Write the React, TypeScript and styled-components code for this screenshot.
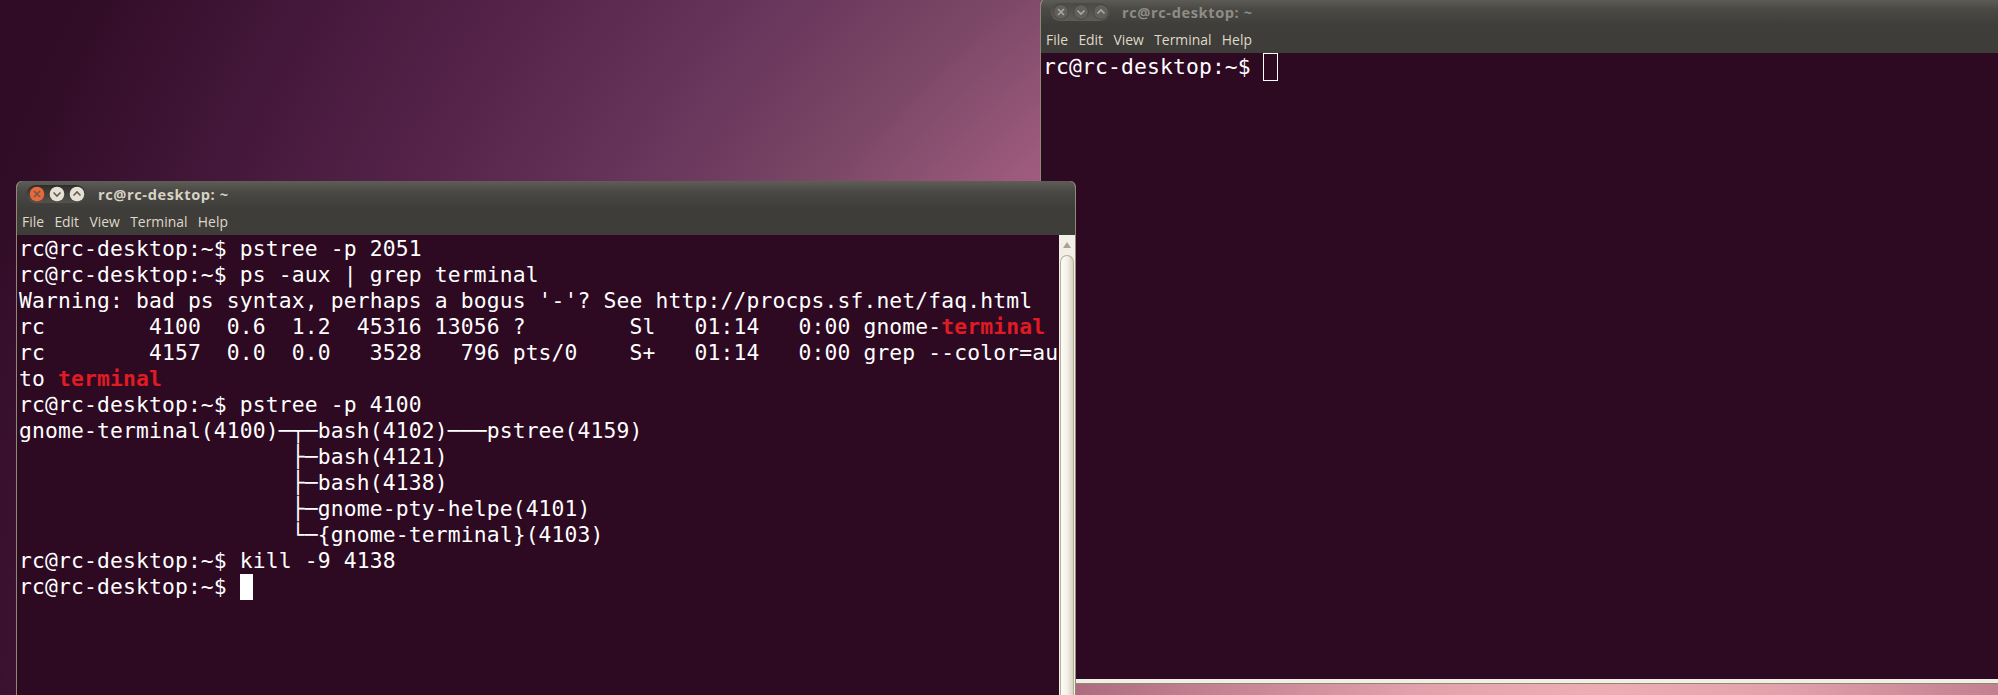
import React from "react";
import styled, { createGlobalStyle } from "styled-components";

const GlobalStyle = createGlobalStyle`
  html, body {
    margin: 0;
    padding: 0;
    height: 100%;
    background: #300c26;
  }
`;

const Desktop = styled.div`
  position: relative;
  width: 1998px;
  height: 695px;
  overflow: hidden;
  background: radial-gradient(
    circle 1800px at 1600px 760px,
    #f2b2b6 0px,
    #e2a0aa 200px,
    #ad6b80 530px,
    #a25d80 800px,
    #7a4766 975px,
    #65325a 1150px,
    #57244b 1300px,
    #46193c 1480px,
    #300c26 1700px
  );
`;

const Window = styled.div<{ $front?: boolean }>`
  position: absolute;
  left: ${props => (props.$front ? "16px" : "1040px")};
  top: ${props => (props.$front ? "181px" : "-1px")};
  width: ${props => (props.$front ? "1060px" : "980px")};
  height: ${props => (props.$front ? "530px" : "685px")};
  z-index: ${props => (props.$front ? 2 : 1)};
  display: flex;
  flex-direction: column;
  box-sizing: border-box;
  border: 1px solid #8f8873;
  border-top: 0;
  border-radius: 6px 6px 0 0;
  overflow: hidden;
  background: #f2efe6;
`;

const TitleBar = styled.div`
  height: 26px;
  flex: none;
  display: flex;
  align-items: center;
  padding-left: 9px;
  background: linear-gradient(#5f5d57, #4a4945 40%, #3f3e3a);
`;

const Pill = styled.svg`
  display: block;
  flex: none;
  width: 60px;
  height: 20px;
`;

const Title = styled.span<{ $front?: boolean }>`
  margin-left: 12px;
  font-family: "Open Sans", "Liberation Sans", sans-serif;
  font-weight: 700;
  font-size: 14.6px;
  letter-spacing: 0.6px;
  color: ${props => (props.$front ? "#d8d2c4" : "#8f8d85")};
`;

const MenuBar = styled.div`
  height: 28px;
  flex: none;
  display: flex;
  align-items: center;
  padding-left: 5px;
  gap: 10.4px;
  background: #3e3d39;
`;

const MenuItem = styled.span`
  font-family: "Open Sans", "Liberation Sans", sans-serif;
  font-size: 13.9px;
  color: #dfd8c8;
`;

const Body = styled.div`
  flex: 1;
  display: flex;
  min-height: 0;
`;

const Screen = styled.div`
  flex: 1;
  background: #2d0922;
  padding: 1px 0 0 2px;
  overflow: hidden;
`;

const Row = styled.div`
  height: 26px;
  font-family: "DejaVu Sans Mono", "Liberation Mono", monospace;
  font-size: 21.33px;
  line-height: 26px;
  letter-spacing: 0.15px;
  white-space: pre;
  color: #fff;
`;

const Match = styled.span`
  font-weight: 700;
  color: #e01b24;
`;

const Cursor = styled.span<{ $hollow?: boolean }>`
  display: inline-block;
  box-sizing: border-box;
  width: ${props => (props.$hollow ? "15px" : "13px")};
  height: ${props => (props.$hollow ? "28px" : "26px")};
  margin: ${props => (props.$hollow ? "-1px 0 0 -1px" : "0")};
  vertical-align: top;
  background: ${props => (props.$hollow ? "transparent" : "#fff")};
  border: ${props => (props.$hollow ? "1px solid #fff" : "0")};
`;

const Scrollbar = styled.div`
  flex: none;
  width: 16px;
  display: flex;
  flex-direction: column;
  align-items: center;
  background: #f2efe6;
`;

const ArrowUp = styled.div`
  height: 20px;
  flex: none;
  display: flex;
  align-items: center;
  justify-content: center;
`;

const Arrow = styled.div`
  width: 0;
  height: 0;
  border-left: 4px solid transparent;
  border-right: 4px solid transparent;
  border-bottom: 6px solid #a9a28f;
`;

const Thumb = styled.div`
  width: 14px;
  flex: 1;
  box-sizing: border-box;
  border: 1px solid #b5ae9b;
  border-bottom: 0;
  border-radius: 7px 7px 0 0;
  background: linear-gradient(90deg, #fdfcf8, #f4f1e9 50%, #d8d2c2);
`;

const BottomEdge = styled.div`
  height: 4px;
  flex: none;
  background: #f2efe6;
`;

function WindowButtons({ active }: { active?: boolean }) {
  const centers = [11, 31, 51];
  return (
    <Pill viewBox="0 0 60 20">
      <defs>
        <linearGradient id={active ? "pillA" : "pillB"} x1="0" y1="0" x2="0" y2="1">
          <stop offset="0" stopColor={active ? "#2e2d2a" : "#4b4a46"} />
          <stop offset="1" stopColor={active ? "#55534e" : "#5e5c57"} />
        </linearGradient>
      </defs>
      <rect x="0.5" y="1" width="59" height="18" rx="9" fill={`url(#${active ? "pillA" : "pillB"})`} />
      {centers.map((cx, i) => (
        <circle
          key={cx}
          cx={cx}
          cy="10"
          r="7.3"
          fill={active ? (i === 0 ? "#e8683a" : "#e6e1d6") : "#61605b"}
          stroke={active ? "none" : "#4a4945"}
        />
      ))}
      <g fill="none" strokeWidth="1.6" stroke={active ? "#6b5a50" : "#aaa89f"}>
        <path d="M8 7l6 6M14 7l-6 6" />
        <path d="M27.5 8.5l3.5 3.5 3.5-3.5" />
        <path d="M47.5 11.5l3.5-3.5 3.5 3.5" />
      </g>
    </Pill>
  );
}

function Menu() {
  return (
    <MenuBar>
      <MenuItem>File</MenuItem>
      <MenuItem>Edit</MenuItem>
      <MenuItem>View</MenuItem>
      <MenuItem>Terminal</MenuItem>
      <MenuItem>Help</MenuItem>
    </MenuBar>
  );
}

export default function App() {
  return (
    <Desktop>
      <GlobalStyle />
      <Window>
        <TitleBar>
          <WindowButtons />
          <Title>rc@rc-desktop: ~</Title>
        </TitleBar>
        <Menu />
        <Body>
          <Screen>
            <Row>rc@rc-desktop:~$ <Cursor $hollow /></Row>
          </Screen>
        </Body>
        <BottomEdge />
      </Window>
      <Window $front>
        <TitleBar>
          <WindowButtons active />
          <Title $front>rc@rc-desktop: ~</Title>
        </TitleBar>
        <Menu />
        <Body>
          <Screen>
            <Row>rc@rc-desktop:~$ pstree -p 2051</Row>
            <Row>rc@rc-desktop:~$ ps -aux | grep terminal</Row>
            <Row>Warning: bad ps syntax, perhaps a bogus '-'? See http://procps.sf.net/faq.html</Row>
            <Row>rc        4100  0.6  1.2  45316 13056 ?        Sl   01:14   0:00 gnome-<Match>terminal</Match></Row>
            <Row>rc        4157  0.0  0.0   3528   796 pts/0    S+   01:14   0:00 grep --color=au</Row>
            <Row>to <Match>terminal</Match></Row>
            <Row>rc@rc-desktop:~$ pstree -p 4100</Row>
            <Row>gnome-terminal(4100)─┬─bash(4102)───pstree(4159)</Row>
            <Row>{"                     ├─bash(4121)"}</Row>
            <Row>{"                     ├─bash(4138)"}</Row>
            <Row>{"                     ├─gnome-pty-helpe(4101)"}</Row>
            <Row>{"                     └─{gnome-terminal}(4103)"}</Row>
            <Row>rc@rc-desktop:~$ kill -9 4138</Row>
            <Row>rc@rc-desktop:~$ <Cursor /></Row>
          </Screen>
          <Scrollbar>
            <ArrowUp><Arrow /></ArrowUp>
            <Thumb />
          </Scrollbar>
        </Body>
      </Window>
    </Desktop>
  );
}
